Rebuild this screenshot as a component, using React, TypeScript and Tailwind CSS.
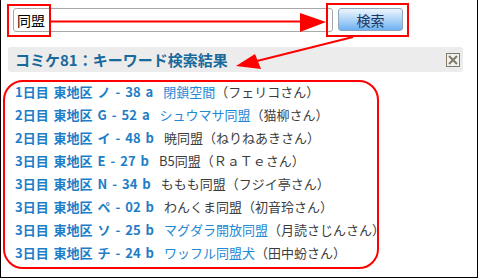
const RESULTS = [
  { space: "1日目 東地区 ノ - 38 a", name: "閉鎖空間", link: true, author: "（フェリコさん）" },
  { space: "2日目 東地区 G - 52 a", name: "シュウマサ同盟", link: true, author: "（猫柳さん）" },
  { space: "2日目 東地区 イ - 48 b", name: "暁同盟", link: false, author: "（ねりねあきさん）" },
  { space: "3日目 東地区 E - 27 b", name: "B5同盟", link: false, author: "（ＲａＴｅさん）" },
  { space: "3日目 東地区 N - 34 b", name: "ももも同盟", link: false, author: "（フジイ亭さん）" },
  { space: "3日目 東地区 ペ - 02 b", name: "わんくま同盟", link: false, author: "（初音玲さん）" },
  { space: "3日目 東地区 ソ - 25 b", name: "マグダラ開放同盟", link: true, author: "（月読さじんさん）" },
  { space: "3日目 東地区 チ - 24 b", name: "ワッフル同盟犬", link: true, author: "（田中蚡さん）" },
];

export default function App() {
  return (
    <div className="relative w-[479px] h-[279px] bg-white font-['Noto_Sans_CJK_JP','Noto_Sans',sans-serif]">
      <div className="w-[478px] h-[278px] border-l border-r border-b border-black flex flex-col">
        {/* 検索フォーム */}
        <div className="flex items-start pt-[8px] pl-[12px]">
          <input
            readOnly
            value="同盟"
            className="w-[320px] h-[24px] border border-[#a8a8a8] rounded-[3px] px-[3px] text-[14px] text-black outline-none"
          />
          <button className="ml-[5px] w-[65px] h-[23px] rounded-[3px] border border-[#8fa6bd] bg-linear-to-b from-[#eef5fd] to-[#6cb2f1] text-[14px] leading-none text-[#1c3562]">
            検索
          </button>
        </div>

        {/* 見出し */}
        <div className="mt-[15px] ml-[7px] w-[455px] h-[25px] bg-[#ececec] rounded-[3px] flex items-center justify-between pl-[7px] pr-[3px]">
          <h2 className="text-[15px] font-bold text-[#196a9b] leading-none">
            コミケ81：キーワード検索結果
          </h2>
          <svg width="14" height="14" viewBox="0 0 14 14">
            <rect x="0.5" y="0.5" width="13" height="13" fill="#f2f2f2" stroke="#7f7966" />
            <path d="M3 3 L11 11 M11 3 L3 11" stroke="#7f7966" strokeWidth="2" />
          </svg>
        </div>

        {/* 検索結果 */}
        <ul className="mt-[8px] pl-[14px] text-[13px]">
          {RESULTS.map((r) => (
            <li key={r.space} className="h-[23px] flex items-center whitespace-nowrap">
              <span className="font-bold text-[#1e7dc7] [word-spacing:2px]">{r.space}</span>
              <span className={r.link ? "ml-[10px] text-[#2388d4]" : "ml-[10px] text-[#3c3c3c]"}>
                {r.name}
              </span>
              <span className="text-[#3c3c3c]">{r.author}</span>
            </li>
          ))}
        </ul>
      </div>

      {/* 注釈（赤枠・矢印） */}
      <div className="absolute left-[7px] top-[4px] w-[44px] h-[33px] border-2 border-[#ff0000]" />
      <div className="absolute left-[326px] top-[3px] w-[83px] h-[34px] border-2 border-[#ff0000]" />
      <div className="absolute left-[3px] top-[80px] w-[376px] h-[189px] rounded-[20px] border-2 border-[#ff0000]" />
      <svg className="absolute left-0 top-0" width="479" height="279">
        <line x1="51" y1="21.5" x2="304" y2="21.5" stroke="#ff0000" strokeWidth="2" />
        <polygon points="300,13 326,22 300,32" fill="#ff0000" />
        <line x1="353" y1="37" x2="257" y2="61" stroke="#ff0000" strokeWidth="2" />
        <polygon points="255,54 261,69 236,66" fill="#ff0000" />
      </svg>
    </div>
  );
}
